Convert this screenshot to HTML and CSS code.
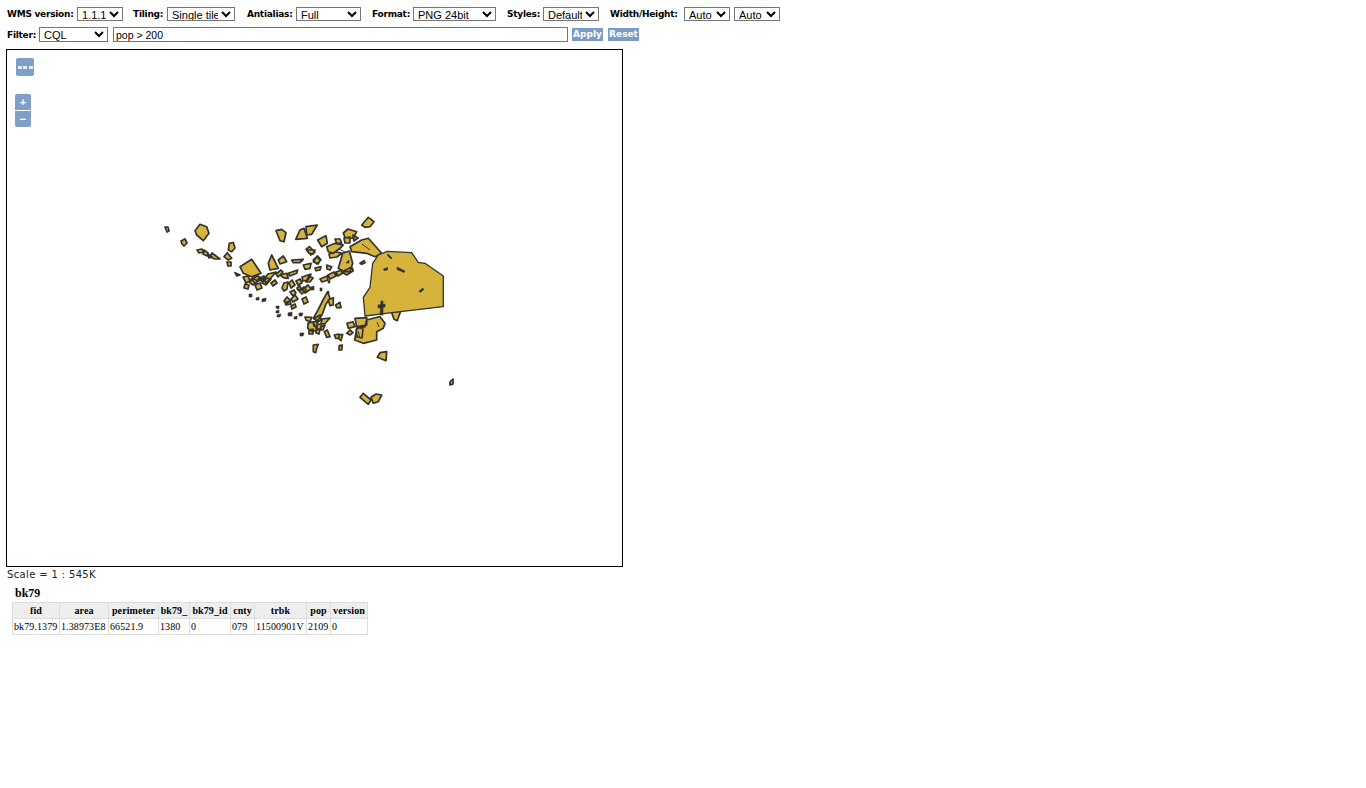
FILE: index.html
```html
<!DOCTYPE html>
<html lang="en">
<head>
<meta charset="utf-8">
<title>bk79 map preview</title>
<link rel="stylesheet" href="styles.css">
</head>
<body>
<form class="toolbar">
  <div class="row row-options">
    <label class="opt opt-wms"><b>WMS version:</b><select class="s-wms"><option>1.1.1</option></select></label>
    <label class="opt opt-tiling"><b>Tiling:</b><select class="s-tiling"><option>Single tile</option></select></label>
    <label class="opt opt-aa"><b>Antialias:</b><select class="s-aa"><option>Full</option></select></label>
    <label class="opt opt-format"><b>Format:</b><select class="s-format"><option>PNG 24bit</option></select></label>
    <label class="opt opt-styles"><b>Styles:</b><select class="s-styles"><option>Default</option></select></label>
    <label class="opt opt-size"><b>Width/Height:</b><select class="s-size"><option>Auto</option></select><select class="s-size s-second"><option>Auto</option></select></label>
  </div>
  <div class="row row-filter">
    <label class="opt opt-filter"><b>Filter:</b><select class="s-filter"><option>CQL</option></select></label>
    <input class="cql" type="text" value="pop &gt; 200">
    <button class="act" type="button">Apply</button>
    <button class="act act-reset" type="button">Reset</button>
  </div>
</form>

<div class="map">
  <button class="ctl ctl-more" type="button" aria-label="Options"><i></i><i></i><i></i></button>
  <button class="ctl ctl-plus" type="button">+</button>
  <button class="ctl ctl-minus" type="button">−</button>
  <svg class="features" viewBox="7 50 615 516" width="615" height="516" aria-hidden="true">
    <path class="poly" d="
    M165 227L168 227L169 231L167 232Z
    M181 241L185 239L187 243L184 246L182 244Z
    M195 230.7L200 224.3L206.7 226.7L209 233.3L203.3 240.7L196.7 235Z
    M197 250L202 249L204 252L199 253Z M204 250L208 253L207 256L203 254Z M208 254L212 257L209 258Z M212 253L216 256L220 259L215 259L210 257Z
    M229.3 243.3L233.3 242.5L235 248L231.7 251.7L228.3 250Z
    M224 256.7L227.3 252.7L231.7 258.3L228.3 260Z M227 262L231 262L231 266L228 266Z
    M240 266.7L251.7 259.3L261 273.3L251.7 276.7L243.3 273.3Z
    M235 272.7L240 275L237 276Z
    M243 277L248 276L250 281L246 283Z M249 282L254 279L258 281L253 285Z M245 284L249 285L248 289L244 288Z
    M251 279L258 276L262 279L255 283Z M255 285L260 283L262 288L257 290Z
    M262 283L267 278L271 279L266 285Z M258 279L264 276L263 282Z
    M268.3 263.3L271.7 255L278.3 268.3L270 270Z
    M278.3 260L283.3 256L286.7 261.7L280 264Z
    M264 279L268 274L276 272L270 279L266 283Z
    M271 283L275 280L277 283L273 286Z M276 274L281 270L283 272L278 277Z
    M280 275L286.7 273.3L288.3 278.3L283.3 277.7Z
    M288.3 273.3L297.7 270L296.7 273.3L290 276Z
    M291.7 260L303.3 259.3L300 262.7L293.3 262.7Z
    M303.3 265L311 263.3L310 268.3L305 269.3Z
    M313.3 260L317.7 256L321 260L316.7 264Z
    M306.7 250L315 250L313.3 254L309 253.3Z
    M302 277L311 274L308 280L303 281Z M296 281L300 279L302 283L298 285Z M309 276L313 278L310 282L306 282Z
    M315 268L321 266.7L320 270L316 270.7Z
    M320 279L327 276L328 280L322 282Z M328 275L334 272L336 276L330 279Z M336 272L342 270L343 273L338 276Z
    M282 288L284 283L288 282L287 289L284 291Z M289 283L292 280L295 285L291 288Z
    M284 301L287 297L290 300L287 304Z M291 299L295 295L298 299L293 302Z M290 292L294 290L296 293L293 296Z
    M299 291L304 287L306 290L302 294Z M302 299L306 297L308 302L304 304Z M297 288L300 286L301 289L298 290Z
    M285 302.5L290 301L291 304L286 305Z M291 306L295 304L296 307L292 309Z M302 290L308 285L311 289L305 293Z
    M276 230.7L281.7 229.3L286 232.7L284 241.7L280 240.7Z
    M295.7 239.3L300 230L304 228.3L307.3 238.3Z
    M306 226.7L317.3 225L311.7 234.3L306.7 235Z
    M317.7 240L326 235.7L327.3 243.3L321.7 246.7Z
    M306 249.3L309.3 246.7L315 252L310.7 255Z
    M313.3 261.7L316.7 256.7L320 260L318.3 264Z
    M326.7 246.7L335 243.3L343.3 245L340 248.3L333.3 253.3L328.3 251.7Z
    M335 239L340 239L341.7 243.3L336.7 243.3Z
    M329 254L336 252L342 253L337 257L330 258Z
    M343.3 233L348 229L356.7 231.7L353.3 238.3L345 237.5Z
    M344 238L350 237L350 243L345 243Z M353 235L358 238L354 241Z
    M350 246.7L361.7 240L368.3 238.3L381.7 253.3L375 256.7L366.7 253.3L351.7 251.7Z
    M338.3 268.3L342.7 253.3L349.3 251L352.7 263.3L350 271.7L343.3 271.7Z
    M341.7 272L351.7 267L353.3 270.7L346.7 275Z
    M326.7 265L331.7 266.7L330 270L327 269Z
    M360 263.3L364 260.7L365 262.7L361.7 264.3Z
    M361.7 225L368.3 217.3L374 221.7L370 226.7L365 227.3Z
    M391.7 312.7L400.7 311L397.3 320.7L394 319.3Z
    M327.7 291.7L330 298.3L326 304L322 315L317 321L313.3 318.3L318 310L323 300Z
    M328.3 300L333.3 297.7L333.3 305L330 305.7Z
    M335.7 305L340 302.3L341 307.7L336.7 307.7Z
    M315 318L320 315L321 320L316.7 322.5Z
    M322 319L330 318L325 323.5L321 324Z
    M308 323.3L313 321.7L317 330L312 331.7L307.7 328.3Z
    M305 317L311.7 317.3L310 322L306 320Z
    M317 325L322 323.5L320 329L317 329Z
    M313 322L318 321L317 326L314 326Z M309 330L313 329L313 334L309 334Z M316 330L320 329L319 334L316 333Z M321 327L325 325L323 330L321 330Z
    M324.3 331.7L327.3 330L330 336.7L326.7 337.3Z
    M334.3 335L339 334L339 338.3L335.7 338.3Z
    M339.3 335L342.7 334.3L341 340.7L338.3 338.3Z
    M313.3 345L318.3 344.3L316.7 348.3L315.7 352.7L313.3 351.7Z
    M339.3 345.7L342.3 345L341.7 350L339 350Z
    M354.7 340L356.7 328.3L365 326.7L366.7 320L373.3 318.3L380 316.7L385 323.3L383.3 328.3L376.7 331.7L376.7 340L363.3 343.3Z
    M355 318.3L366.7 317.7L366.7 325L356.7 326.7Z
    M347 323.3L353 321.7L355 326.7L348.3 328.3Z
    M346.7 333.3L350 330L353 332.7L350 335Z
    M356 330L359 327.5L363 329L362 338L357 337Z
    M377.3 357.3L380 352.7L386.7 351.7L386 360.7Z
    M450 382L453 379L453 384L450 385Z
    M360 397.3L363.3 393.3L371 400L368.3 404.3Z
    M371 397.3L376 394L381.7 395L378.3 401.7L373.3 403.3Z"/>
    <path class="poly poly-large" d="M378.3 255L387.3 251.3L411.7 252.7L418.3 262.3L425 263.3L443.3 276L443.3 306.7L391.7 312.7L365 316L363.3 297.3L370 287.3L372.7 263.3Z"/>
    <path class="holes" d="M388 254L392 258L391 259L387 255Z M383.5 269L387.5 267.5L387.5 270L384 270.5Z M397 267L405 271L404 272.5L397 269.5Z M419 291L423 288L423.5 290L420 292.5Z M381 301L383 301L383 315L380 315Z M378 305L385 304L385 307L378 308Z M346 263L349 260L349 263Z
    M249 294L252 294L252 297L249 297Z M256 298L259 297L259 300L256 300Z M262 299L266 298L266 301L262 302Z M276 306L279 306L279 309L276 308Z
    M276 311L279 310L279 313L276 313Z M277 315L281 314L280 317L277 317Z M299 313L303 313L302 316L299 316Z M288 313L292 312L292 316L288 316Z M294 317L297 316L297 319L294 319Z
    M300 333L304 333L303 336L300 336Z M328 281L330 280L330 283L328 283Z M311 287L314 286L314 290L311 290Z M320 288L322 288L322 291L320 291Z M327 292L329 291L329 294L327 294Z"/>
    <path class="lines" d="M362 244L370 250M339 249L345 252M358 331L360 338M377 322L379 327"/>
  </svg>
</div>
<div class="scale">Scale = 1 : 545K</div>

<section class="result">
  <h5 class="result-title">bk79</h5>
  <table class="attrs">
    <colgroup>
      <col class="w-fid"><col class="w-area"><col class="w-per"><col class="w-bk"><col class="w-bkid"><col class="w-cnty"><col class="w-trbk"><col class="w-pop"><col class="w-ver">
    </colgroup>
    <thead>
      <tr><th>fid</th><th>area</th><th>perimeter</th><th>bk79_</th><th>bk79_id</th><th>cnty</th><th>trbk</th><th>pop</th><th>version</th></tr>
    </thead>
    <tbody>
      <tr><td>bk79.1379</td><td>1.38973E8</td><td>66521.9</td><td>1380</td><td>0</td><td>079</td><td>11500901V</td><td>2109</td><td>0</td></tr>
    </tbody>
  </table>
</section>
</body>
</html>
```
FILE: styles.css
```css
* { box-sizing: border-box; }
html, body { margin: 0; padding: 0; background: #fff; }
body { height: 788px; overflow: hidden; font-family: "Liberation Sans", Arial, sans-serif; color: #000; }

.toolbar { padding: 7px 0 0 7px; }
.row { display: flex; }
.row-options { height: 14px; align-items: center; }
.row-filter { height: 15px; margin-top: 6px; align-items: flex-end; }
.opt { display: flex; align-items: center; }
.opt b { font: bold 9px "DejaVu Sans", Verdana, sans-serif; letter-spacing: -.25px; color: #000; white-space: nowrap; margin-right: 4px; }
.opt-wms b { width: 66px; }
.opt-tiling b { width: 30px; }
.opt-aa b { width: 45px; }
.opt-format b { width: 37px; }
.opt-styles b { width: 32px; }
.opt-size b { width: 70px; }
.opt-filter b { width: 28px; }
.opt-wms { margin-right: 10px; }
.opt-tiling { margin-right: 12px; }
.opt-aa, .opt-format, .opt-styles { margin-right: 11px; }

select {
  height: 14px; padding: 0; margin: 0;
  font: 11px "Liberation Sans", Arial, sans-serif; color: #000;
  background: #fff; border: 1px solid #767676; border-radius: 0;
}
.s-wms { width: 46px; }
.s-tiling { width: 68px; }
.s-aa { width: 65px; }
.s-format { width: 83px; }
.s-styles { width: 56px; }
.s-size { width: 46px; }
.s-second { margin-left: 4px; }
.s-filter { width: 69px; height: 15px; }

.cql {
  width: 455px; height: 15px; margin-left: 5px; padding: 0 2px;
  font: 10.5px "Liberation Sans", Arial, sans-serif; color: #000;
  background: #fff; border: 1px solid #767676; border-radius: 0; outline: 0;
}
.act {
  width: 31px; height: 13px; margin: 0 0 1px 4px; padding: 0; border: 0;
  background: #7b9cc6; color: #fff;
  font: bold 9px/13px "DejaVu Sans", Verdana, sans-serif;
}
.act-reset { margin-left: 5px; }

.map {
  position: relative; width: 617px; height: 518px; margin: 7px 0 0 6px;
  background: #fff; border: 1px solid #000;
}
.features { display: block; filter: blur(0.4px); }
.poly { fill: #d6b43c; stroke: #33322e; stroke-width: 1.7; stroke-linejoin: round; }
.poly-large { stroke-width: 1.3; }
.holes { fill: #33322c; stroke: #33322c; stroke-width: .6; }
.lines { fill: none; stroke: #33322e; stroke-width: 1; }

.ctl {
  position: absolute; z-index: 2; padding: 0; border: 0; border-radius: 2px;
  background: #7f9ec8; color: #fff;
  font: bold 11px/13px "Liberation Sans", Arial, sans-serif;
}
.ctl-more { left: 9px; top: 8px; width: 18px; height: 18px; display: flex; align-items: center; justify-content: center; gap: 1.5px; }
.ctl-more i { display: block; width: 4px; height: 3px; background: #fff; opacity: .8; }
.ctl-plus { left: 8px; top: 44px; width: 16px; height: 16px; border-radius: 2px 2px 0 0; }
.ctl-minus { left: 8px; top: 61px; width: 16px; height: 16px; border-radius: 0 0 2px 2px; }

.scale {
  margin: 1px 0 0 7px; height: 13px;
  font: 10px/13px "DejaVu Sans", Verdana, sans-serif; letter-spacing: .35px; color: #222; white-space: nowrap;
}

.result { margin: 6px 0 0 12px; }
.result-title { margin: 0 0 2px 3px; height: 13px; font: bold 12px/13px "Liberation Serif", "Times New Roman", serif; color: #000; }
.attrs { border-collapse: collapse; table-layout: fixed; width: 355px; font: 10px/14px "Liberation Serif", "Times New Roman", serif; letter-spacing: .1px; color: #000; }
.attrs th, .attrs td { border: 1px solid #ddd; padding: 0 1px; white-space: nowrap; height: 16px; overflow: hidden; }
.attrs th { background: #eee; font-weight: bold; text-align: center; }
.attrs td { text-align: left; }
.w-fid { width: 47px; }
.w-area { width: 49px; }
.w-per { width: 50px; }
.w-bk { width: 31px; }
.w-bkid { width: 41px; }
.w-cnty { width: 24px; }
.w-trbk { width: 52px; }
.w-pop { width: 24px; }
.w-ver { width: 37px; }
```
